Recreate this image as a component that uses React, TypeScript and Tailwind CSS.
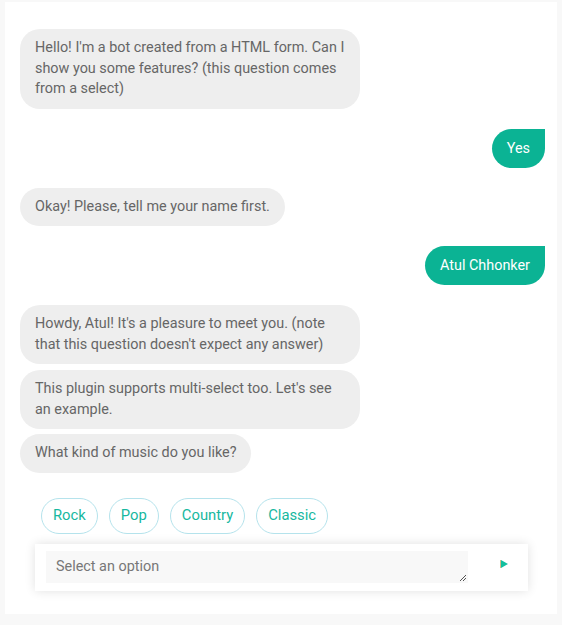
import React from "react";

const Bot = ({ children, className = "" }: { children: React.ReactNode; className?: string }) => (
  <div
    className={`self-start max-w-[340px] rounded-[20px] bg-[#eeeeee] px-[15px] py-[9px] text-[14.4px] leading-[20.5px] text-[#666666] ${className}`}
  >
    {children}
  </div>
);

const User = ({ children, className = "" }: { children: React.ReactNode; className?: string }) => (
  <div
    className={`self-end rounded-[20px] rounded-tr-none bg-[#0bb394] px-[15px] py-[9px] text-[14.4px] leading-[21px] text-white ${className}`}
  >
    {children}
  </div>
);

export default function App() {
  const chips = ["Rock", "Pop", "Country", "Classic"];
  return (
    <div
      className="min-h-[625px] w-[562px] bg-[#f8f8f8] pl-[5px] pr-[5px] pt-[2px]"
      style={{ fontFamily: "Roboto, 'Liberation Sans', sans-serif" }}
    >
      <div className="flex h-[612px] w-[552px] flex-col bg-white">
        <div className="flex flex-col pl-[15px] pr-[12px] pt-[27px]">
          <Bot>
            Hello! I'm a bot created from a HTML form. Can I show you some features? (this question comes
            from a select)
          </Bot>
          <User className="mt-[20px]">Yes</User>
          <Bot className="mt-[20px]">Okay! Please, tell me your name first.</Bot>
          <User className="mt-[20px]">Atul Chhonker</User>
          <Bot className="mt-[20px]">
            Howdy, Atul! It's a pleasure to meet you. (note that this question doesn't expect any answer)
          </Bot>
          <Bot className="mt-[6px]">This plugin supports multi-select too. Let's see an example.</Bot>
          <Bot className="mt-[5px]">What kind of music do you like?</Bot>
        </div>
        <div className="mt-[25px] flex gap-[11px] pl-[36px]">
          {chips.map((c) => (
            <div
              key={c}
              className="flex h-[36px] items-center rounded-full border border-[#b5e3ec] px-[11px] text-[14.8px] text-[#17b8a0]"
            >
              {c}
            </div>
          ))}
        </div>
        <div className="ml-[30px] mt-[10px] flex h-[47px] w-[493px] items-center bg-white pl-[11px] shadow-[0_0_10px_rgba(0,0,0,0.12)]">
          <div className="relative flex h-[32px] w-[422px] items-center bg-[#f8f8f8] pl-[10px] text-[14.4px] text-[#777777]">
            Select an option
            <svg className="absolute bottom-[1px] right-[1px]" width="9" height="9" viewBox="0 0 9 9">
              <path d="M8 2 L2 8 M8 5 L5 8" stroke="#555" strokeWidth="1" />
            </svg>
          </div>
          <div className="ml-[32px] mb-[6px] flex items-center">
            <svg width="9" height="8" viewBox="0 0 9 8">
              <rect x="0" y="0" width="1" height="8" fill="#d8b98a" />
              <path d="M1 0 L8 4 L1 8 Z" fill="#12bfa0" />
            </svg>
          </div>
        </div>
      </div>
    </div>
  );
}
